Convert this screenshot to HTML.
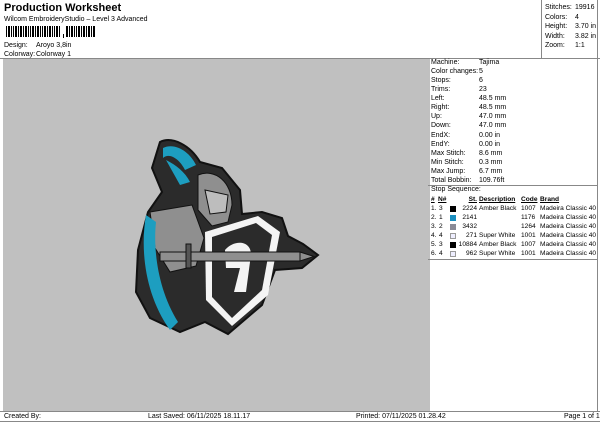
<!DOCTYPE html>
<html><head><meta charset="utf-8"><style>
*{margin:0;padding:0;box-sizing:border-box}
body{width:600px;height:424px;background:#fff;font-family:"Liberation Sans",sans-serif;font-size:7px;color:#000;position:relative;overflow:hidden}
.a{position:absolute;white-space:nowrap}
.t{font-size:6.6px}
</style></head><body>
<div class="a" style="left:4px;top:2px;font-size:11px;font-weight:bold">Production Worksheet</div>
<div class="a" style="left:4px;top:16px">Wilcom EmbroideryStudio – Level 3 Advanced</div>
<svg class="a" style="left:6px;top:26px" width="92" height="12">
<g fill="#000">
<rect x="0" y="0" width="1" height="11"/><rect x="2" y="0" width="2" height="11"/><rect x="5" y="0" width="1" height="11"/><rect x="7" y="0" width="1" height="11"/><rect x="9" y="0" width="2" height="11"/><rect x="12" y="0" width="1" height="11"/><rect x="14" y="0" width="2" height="11"/><rect x="17" y="0" width="1" height="11"/><rect x="19" y="0" width="2" height="11"/><rect x="22" y="0" width="1" height="11"/><rect x="24" y="0" width="1" height="11"/><rect x="26" y="0" width="2" height="11"/><rect x="29" y="0" width="1" height="11"/><rect x="31" y="0" width="2" height="11"/><rect x="34" y="0" width="1" height="11"/><rect x="36" y="0" width="1" height="11"/><rect x="38" y="0" width="2" height="11"/><rect x="41" y="0" width="1" height="11"/><rect x="43" y="0" width="2" height="11"/><rect x="46" y="0" width="1" height="11"/><rect x="48" y="0" width="1" height="11"/><rect x="50" y="0" width="2" height="11"/><rect x="53" y="0" width="1" height="11"/>
<rect x="57" y="8" width="1" height="4"/>
<rect x="60" y="0" width="2" height="11"/><rect x="63" y="0" width="1" height="11"/><rect x="65" y="0" width="2" height="11"/><rect x="68" y="0" width="1" height="11"/><rect x="70" y="0" width="1" height="11"/><rect x="72" y="0" width="2" height="11"/><rect x="75" y="0" width="1" height="11"/><rect x="77" y="0" width="2" height="11"/><rect x="80" y="0" width="1" height="11"/><rect x="82" y="0" width="2" height="11"/><rect x="85" y="0" width="1" height="11"/><rect x="87" y="0" width="2" height="11"/>
</g></svg>
<div class="a" style="left:4px;top:42px">Design:</div><div class="a" style="left:36px;top:42px">Aroyo 3,8in</div>
<div class="a" style="left:4px;top:51px">Colorway:</div><div class="a" style="left:36px;top:51px">Colorway 1</div>
<div class="a" style="left:541px;top:0;width:1px;height:59px;background:#888"></div>
<div class="a" style="left:597px;top:0;width:1px;height:59px;background:#888"></div>
<div class="a" style="left:545px;top:3px;line-height:9.5px">Stitches:<br>Colors:<br>Height:<br>Width:<br>Zoom:</div>
<div class="a" style="left:575px;top:3px;line-height:9.5px">19916<br>4<br>3.70 in<br>3.82 in<br>1:1</div>
<div class="a" style="left:0;top:58px;width:600px;height:1px;background:#888"></div>
<div class="a" style="left:3px;top:59px;width:427px;height:352px;background:#c0c0c0"></div>
<div class="a" style="left:597px;top:59px;width:1px;height:353px;background:#888"></div>
<div class="a" style="left:0;top:411px;width:600px;height:1px;background:#888"></div>
<div class="a" style="left:0;top:421px;width:600px;height:1px;background:#888"></div>
<div class="a" style="left:428px;top:185px;width:169px;height:1px;background:#888"></div>
<div class="a" style="left:428px;top:259px;width:169px;height:1px;background:#888"></div>
<div class="a" style="left:431px;top:58px;line-height:9.07px">Machine:<br>Color changes:<br>Stops:<br>Trims:<br>Left:<br>Right:<br>Up:<br>Down:<br>EndX:<br>EndY:<br>Max Stitch:<br>Min Stitch:<br>Max Jump:<br>Total Bobbin:</div>
<div class="a" style="left:479px;top:58px;line-height:9.07px">Tajima<br>5<br>6<br>23<br>48.5 mm<br>48.5 mm<br>47.0 mm<br>47.0 mm<br>0.00 in<br>0.00 in<br>8.6 mm<br>0.3 mm<br>6.7 mm<br>109.76ft</div>
<div class="a" style="left:431px;top:186px">Stop Sequence:</div>
<div class="a t" style="left:431px;top:195px;line-height:9px;font-weight:bold;text-decoration:underline">#</div>
<div class="a t" style="left:438px;top:195px;line-height:9px;font-weight:bold;text-decoration:underline">N#</div>
<div class="a t" style="left:431px;top:204px;line-height:9px">1.<br>2.<br>3.<br>4.<br>5.<br>6.</div>
<div class="a t" style="left:439px;top:204px;line-height:9px">3<br>1<br>2<br>4<br>3<br>4</div>
<div class="a" style="left:450px;top:205.5px;width:6px;height:6px;background:#000"></div>
<div class="a" style="left:450px;top:214.5px;width:6px;height:6px;background:#1a8fc0"></div>
<div class="a" style="left:450px;top:223.5px;width:6px;height:6px;background:#8a8a96"></div>
<div class="a" style="left:450px;top:232.5px;width:6px;height:6px;background:#eef;border:1px solid #999"></div>
<div class="a" style="left:450px;top:241.5px;width:6px;height:6px;background:#000"></div>
<div class="a" style="left:450px;top:250.5px;width:6px;height:6px;background:#eef;border:1px solid #999"></div>
<div class="a t" style="left:440px;width:37px;text-align:right;top:195px;line-height:9px"><b style="text-decoration:underline">St.</b><br>2224<br>2141<br>3432<br>271<br>10884<br>962</div>
<div class="a t" style="left:479px;top:195px;line-height:9px"><b style="text-decoration:underline">Description</b><br>Amber Black<br>&nbsp;<br>&nbsp;<br>Super White<br>Amber Black<br>Super White</div>
<div class="a t" style="left:521px;top:195px;line-height:9px"><b style="text-decoration:underline">Code</b><br>1007<br>1176<br>1264<br>1001<br>1007<br>1001</div>
<div class="a t" style="left:540px;top:195px;line-height:9px"><b style="text-decoration:underline">Brand</b><br>Madeira Classic 40<br>Madeira Classic 40<br>Madeira Classic 40<br>Madeira Classic 40<br>Madeira Classic 40<br>Madeira Classic 40</div>
<svg class="a" style="left:0;top:0" width="430" height="411">
<path d="M160 142 C172 136 190 145 200 162 L222 168 L240 190 L242 214 L262 212 L282 218 L288 236 L303 244 L318 255 L302 268 L275 270 L262 305 L228 334 L205 322 L180 332 L150 318 L136 292 L138 250 L148 212 L162 192 L152 168 Z" fill="#2b2b2b" stroke="#111" stroke-width="2"/>
<path d="M163 148 C175 142 190 152 196 165 L185 170 C180 160 170 152 163 158 Z" fill="#1d9ec0"/>
<path d="M166 160 C176 165 185 172 190 182 L180 185 Z" fill="#1d9ec0"/>
<path d="M198 175 C215 168 232 182 232 205 L228 222 L212 226 L198 210 Z" fill="#8f8f8f" stroke="#111"/>
<path d="M205 190 L228 195 L226 212 L210 214 Z" fill="#bdbdbd" stroke="#111" stroke-width="1"/>
<path d="M150 212 L192 205 L204 238 L196 266 L170 272 L155 248 Z" fill="#8f8f8f" stroke="#111"/>
<path d="M146 215 C140 250 145 295 170 330 L178 322 C158 290 153 250 156 222 Z" fill="#1d9ec0"/>
<path d="M205 232 L258 216 L280 232 L268 295 L232 326 L206 300 Z" fill="#f4f4f4"/>
<path d="M212 237 L256 223 L272 235 L262 290 L232 318 L212 297 Z" fill="#2b2b2b"/>
<path d="M225 250 C235 238 256 240 250 262 L246 292 L234 292 L240 268 L226 268 Z" fill="#f4f4f4"/>
<rect x="160" y="252" width="140" height="9" fill="#8f8f8f" stroke="#111"/>
<path d="M300 252 L314 256.5 L300 261 Z" fill="#8f8f8f" stroke="#111"/>
<rect x="186" y="244" width="5" height="24" fill="#555" stroke="#111"/>
</svg>
<div class="a" style="left:4px;top:413px">Created By:</div>
<div class="a" style="left:148px;top:413px">Last Saved: 06/11/2025 18.11.17</div>
<div class="a" style="left:356px;top:413px">Printed: 07/11/2025 01.28.42</div>
<div class="a" style="left:564px;top:413px">Page 1 of 1</div>
</body></html>
